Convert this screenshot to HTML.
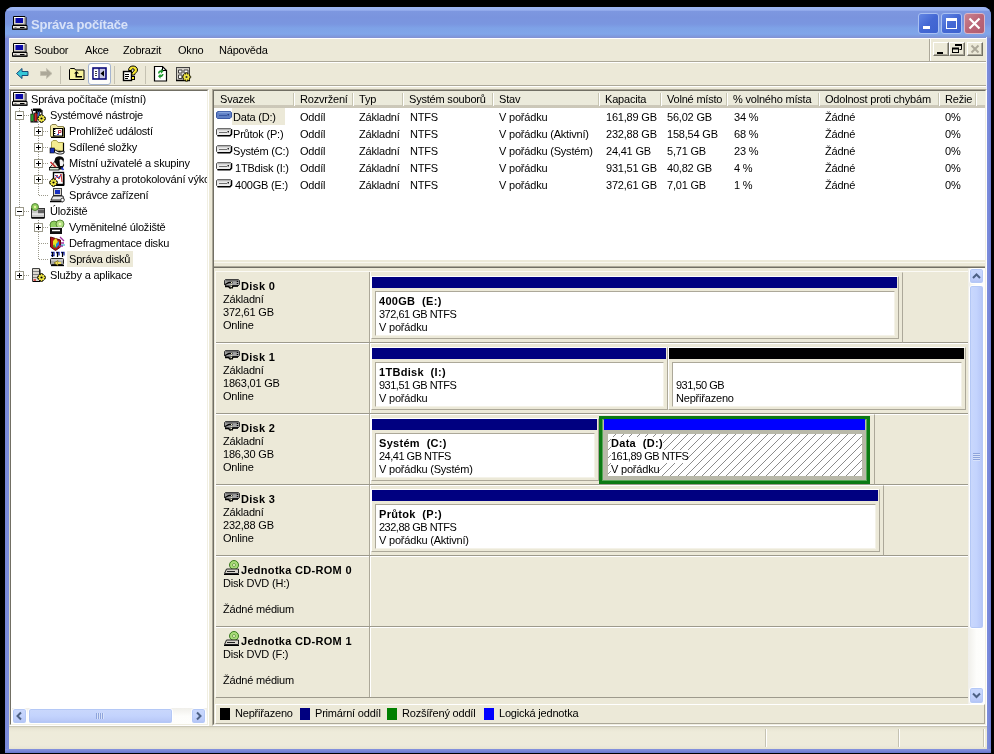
<!DOCTYPE html>
<html><head><meta charset="utf-8"><title>Správa počítače</title>
<style>
*{margin:0;padding:0;box-sizing:border-box}
html,body{width:994px;height:754px;overflow:hidden;background:#000}
body{position:relative;font-family:"Liberation Sans",sans-serif;font-size:11px;color:#000}
.a{position:absolute}
.t{will-change:transform;position:absolute;white-space:nowrap;line-height:13px;height:13px;letter-spacing:-0.2px}
#win{left:5px;top:7px;width:986px;height:746px;background:linear-gradient(90deg,#7886d6 0,#7b8cdb 3px,#7b8cdb 983px,#6f7fd2 986px);border-radius:8px 8px 0 0;overflow:hidden}
#title{left:0;top:0;width:986px;height:31px;background:linear-gradient(#9fb7f3 0,#9ab2f0 3px,#7d97e0 4.500px,#7a94de 10px,#7a96e0 17px,#7ea2e7 21px,#80a5e9 27px,#7e9be0 29px,#8391d0 31px)}
#client{left:9px;top:38px;width:977px;border-left:1px solid #f6f6f2;height:711px;background:#ece9d8}
.cb{width:21px;height:21px;border:1px solid #a9c0f2;border-radius:3px;background:linear-gradient(135deg,#6487e4,#4468d4 50%,#3d62cf)}
.cx{background:linear-gradient(135deg,#c98390,#bb6577 50%,#b05c70);border-color:#dcb6c6}
.mb{width:16px;height:14px;background:#ece9d8;border:1px solid;border-color:#fff #716f64 #716f64 #fff;box-shadow:inset -1px -1px 0 #aca899}
.dv{width:1px;background:repeating-linear-gradient(#fff 0 1px,#9c9a8c 1px 2px)}
.dh{height:1px;background:repeating-linear-gradient(90deg,#9c9a8c 0 1px,#fff 1px 2px)}
.sbb{border:1px solid #fff;border-radius:3px;background:linear-gradient(#cad8fc,#c3d3fd 50%,#b9c9f8 85%,#aebff2);box-shadow:inset 0 0 0 1px #b4c8f6}
.b{font-weight:bold;letter-spacing:0.3px}
.pbox{border:1px solid;border-color:#fff #aca899 #aca899 #fff}
.pin{background:#fff;border:1px solid;border-color:#aca899 #f4f2e8 #f4f2e8 #aca899}
.grp{border:1px solid;border-color:transparent #aca899 #9d9a8c transparent}
.sbv{background:linear-gradient(90deg,#cad8fc,#c3d3fd 50%,#b9c9f8 85%,#aebff2)}
.hb{background:#fff}
.tr{letter-spacing:-0.2px}
.n{letter-spacing:-0.5px}
</style></head><body>
<svg width="0" height="0" style="position:absolute"><defs>
<symbol id="pc" viewBox="0 0 16 16">
<path d="M1.500 1.500h11.500l1 1v7.500h-12.500z" fill="#d8d4cc" stroke="#000" stroke-width="1"/>
<rect x="3.500" y="3" width="7.500" height="5" fill="#0a0aa8"/>
<path d="M12.500 2.500h1v7h-1z" fill="#808080"/>
<path d="M2 2.500h10" stroke="#fff" stroke-width="1"/>
<path d="M.5 10.500h14.500v4h-14.500z" fill="#e8e4dc" stroke="#000" stroke-width="1"/>
<path d="M1 14h14.500" stroke="#202020" stroke-width="1.400"/>
<path d="M8 12.500h4.500" stroke="#000" stroke-width="1"/>
<path d="M2.500 12.500h2" stroke="#808080" stroke-width="1"/>
</symbol>
</defs></svg>
<div id="win" class="a"><div id="title" class="a"></div></div>
<div id="bb" class="a" style="left:5px;top:749px;width:986px;height:4px;background:linear-gradient(#8492de,#7886d6 2px,#6474ca)"></div>
<div id="client" class="a"></div><div class="a" style="left:986px;top:37px;width:1px;height:712px;background:#eef1fa"></div>
<svg class="a" style="left:12px;top:15px" width="16" height="16"><use href="#pc"/></svg>
<div class="t" id="ttxt" style="left:31px;top:17px;font:bold 13px/16px 'Liberation Sans',sans-serif;height:16px;color:#d8e2f8">Správa počítače</div>
<div class="a cb" style="left:918px;top:13px"><div class="a" style="left:4px;top:12px;width:7px;height:3px;background:#fff"></div></div>
<div class="a cb" style="left:941px;top:13px"><div class="a" style="left:4px;top:4px;width:11px;height:11px;border:1px solid #fff;border-top-width:3px"></div></div>
<div class="a cb cx" style="left:964px;top:13px"><svg class="a" style="left:0;top:0" width="19" height="19"><path d="M4.500 4.500l10 10M14.500 4.500l-10 10" stroke="#fff" stroke-width="2.200" fill="none"/></svg></div>
<!-- menu bar -->
<div class="a" style="left:10px;top:38px;width:976px;height:1px;background:#fff"></div>
<svg class="a" style="left:12px;top:42px" width="16" height="16"><use href="#pc"/></svg>
<div class="t m" style="left:34px;top:44px">Soubor</div>
<div class="t m" style="left:85px;top:44px">Akce</div>
<div class="t m" style="left:123px;top:44px">Zobrazit</div>
<div class="t m" style="left:178px;top:44px">Okno</div>
<div class="t m" style="left:219px;top:44px">Nápověda</div>
<div class="a" style="left:929px;top:39px;width:1px;height:22px;background:#aca899"></div>
<div class="a" style="left:930px;top:39px;width:1px;height:22px;background:#fff"></div>
<div class="a mb" style="left:933px;top:42px"><div class="a" style="left:3px;top:9px;width:6px;height:2px;background:#000"></div></div>
<div class="a mb" style="left:949px;top:42px"><svg class="a" style="left:0;top:0" width="14" height="12"><path d="M5.500 2.500h6v4h-2" fill="none" stroke="#000" stroke-width="1"/><path d="M5 2h7" stroke="#000" stroke-width="2"/><rect x="2.500" y="5.500" width="6" height="4" fill="none" stroke="#000"/><path d="M2 5.500h7" stroke="#000" stroke-width="2"/></svg></div>
<div class="a mb" style="left:967px;top:42px"><svg class="a" style="left:0;top:0" width="14" height="12"><path d="M3.500 2.500l7 7M10.500 2.500l-7 7" stroke="#aca899" stroke-width="2" fill="none"/></svg></div>
<div class="a" style="left:10px;top:61px;width:976px;height:1px;background:#aca899"></div>
<div class="a" style="left:10px;top:62px;width:976px;height:1px;background:#fff"></div>

<!-- toolbar -->
<svg class="a" style="left:14px;top:65px" width="180" height="18">
<!-- back -->
<path d="M2.500 8.500l5.500-5v3h6v4h-6v3z" fill="#35c8d8" stroke="#1a4a78" stroke-width="1" stroke-linejoin="round"/>
<!-- forward -->
<path d="M38 8.500l-5.500-5v3h-6v4h6v3z" fill="#aca899" stroke="#c4c0b0" stroke-width="1"/>
<!-- up folder -->
<path d="M55.500 14.500v-10l1-1h4l1 1.500h8.500v9.500z" fill="#f7f39c" stroke="#000" stroke-width="1"/>
<path d="M60 8.500l2.500-2.500l2.500 2.500h-2v2.500h5v1.500h-6.500v-4z" fill="#000"/>
<!-- help -->
<rect x="109.500" y="6.500" width="8" height="9" fill="#fff" stroke="#000" stroke-width="1.400"/>
<path d="M111 9.500h4M111 11.500h4M111 13.500h3" stroke="#000" stroke-width="1"/>
<path d="M114.500 5.500c0-3 2-4.500 4.500-4.500s4.500 1.500 4.500 4c0 2.500-3 3-3 5h-3c0-3 2.800-3.500 2.800-5c0-.8-.6-1.200-1.400-1.200s-1.400.5-1.400 1.700z" fill="#f8e830" stroke="#000" stroke-width="1"/>
<rect x="117.500" y="11.500" width="3" height="3" fill="#f8e830" stroke="#000" stroke-width="1"/>
<!-- refresh -->
<path d="M140.500 1.500h8l4 4v10.500h-12z" fill="#fff" stroke="#000" stroke-width="1.200"/>
<path d="M148.500 1.500v4h4" fill="none" stroke="#000"/>
<path d="M144 8.500c0-2 1.500-3.200 3-3.200v-1.500l2.500 2.500l-2.500 2.500v-1.500c-1 0-1.500.5-1.500 1.200z" fill="#1f9a2f"/>
<path d="M149.500 9c0 2-1.500 3.200-3 3.200v1.500l-2.500-2.500l2.500-2.500v1.500c1 0 1.500-.5 1.500-1.200z" fill="#1f9a2f"/>
<!-- settings -->
<rect x="162.500" y="2.500" width="13" height="13" fill="#d4d0c8" stroke="#404040"/>
<path d="M162 15.500h14" stroke="#000" stroke-width="1.500"/>
<path d="M164.500 5h3.500v3h-3.500zM170 5h4v3h-4zM164.500 10h3.500v3.500h-3.500z" fill="#fff" stroke="#404040" stroke-width="1"/>
<g transform="translate(172.500 12)"><path d="M-1-4.200h2v8.400h-2zM-4.200-1h8.400v2h-8.400z" fill="#e8dc30" stroke="#000" stroke-width=".7"/><path d="M-3.400-2l1.400-1.400l5.400 5.400l-1.400 1.400zM2-3.400l1.400 1.400l-5.400 5.400l-1.400-1.400z" fill="#e8dc30" stroke="#000" stroke-width=".7"/><circle r="2.700" fill="#f0e848"/><circle r="1.100" fill="#303030"/></g>
</svg>
<div class="a" style="left:60px;top:66px;width:1px;height:18px;background:#c5c2b2"></div>
<div class="a" style="left:114px;top:66px;width:1px;height:18px;background:#c5c2b2"></div>
<div class="a" style="left:145px;top:66px;width:1px;height:18px;background:#c5c2b2"></div>
<div class="a" style="left:88px;top:63px;width:23px;height:22px;border:1px solid #a4b4d0;border-radius:3px;background:#fdfdfb"></div>
<svg class="a" style="left:92px;top:67px" width="16" height="14"><rect x="1" y="1" width="13" height="11" fill="#c8c8e4" stroke="#0a0a78" stroke-width="1.600"/><rect x="1.800" y="2.500" width="5" height="8.500" fill="#fff"/><path d="M7 1v11" stroke="#0a0a78" stroke-width="1.200"/><path d="M3 4.500h2M3 6.500h2M3 8.500h2" stroke="#404040" stroke-width="1"/><path d="M12 3.500v6l-3.500-3z" fill="#000"/></svg>
<div class="a" style="left:10px;top:85px;width:976px;height:1px;background:#aca899"></div>
<div class="a" style="left:10px;top:86px;width:976px;height:1px;background:#fff"></div>

<!--TREE_START-->
<div class="a" style="left:9px;top:89px;width:200px;height:637px;background:#fff;border:1px solid;border-color:#aca899 #fff #fff #d5d2c4"></div>
<div class="a" style="left:10px;top:90px;width:198px;height:635px;border:1px solid;border-color:#716f64 #f1efe2 #f1efe2 #716f64"></div>
<div class="a" id="tree" style="left:12px;top:91px;width:195px;height:617px;overflow:hidden">
<div class="a dv" style="left:7px;top:16px;height:168px"></div>
<div class="a dv" style="left:26px;top:32px;height:72px"></div>
<div class="a dv" style="left:26px;top:128px;height:40px"></div>
<svg class="a" style="left:0px;top:0px" width="16" height="16"><use href="#pc"/></svg>
<div class="t tr" style="left:19px;top:2px">Správa počítače (místní)</div>
<div class="a dh" style="left:8px;top:24px;width:10px"></div>
<svg class="a" style="left:3px;top:20px" width="9" height="9"><rect x=".5" y=".5" width="8" height="8" fill="#fff" stroke="#9c9a8c"/><path d="M2 4.500h5" stroke="#000"/></svg>
<svg class="a" style="left:18px;top:16px" width="16" height="16"><path d="M3 1.500h7.500l1.500 1.500v2.500h-2v-1.500h-2.500v3h-2v-3h-2.500z" fill="#000"/><path d="M1.500 2l1.500 5M12 3v4" stroke="#202020" stroke-width="1.300"/><rect x=".8" y="7" width="2.700" height="7.500" fill="#28a028" stroke="#000" stroke-width=".6"/><rect x="4.300" y="6" width="2.700" height="8.500" fill="#d42020" stroke="#000" stroke-width=".6"/><rect x="7.800" y="4" width="1.800" height="7" fill="#3868d8" stroke="#000" stroke-width=".6"/><path d="M.5 15h8" stroke="#000" stroke-width="1"/><g transform="translate(11.5 11.5)"><path d="M-1-4h2v8h-2zM-4-1h8v2h-8z" fill="#e8dc30" stroke="#000" stroke-width=".7"/><path d="M-3.200-1.800l1.400-1.400l5 5l-1.400 1.400zM1.800-3.200l1.400 1.400l-5 5l-1.400-1.400z" fill="#e8dc30" stroke="#000" stroke-width=".7"/><circle r="2.600" fill="#f0e848"/><circle r="1.100" fill="#000"/></g></svg>
<div class="t tr" style="left:38px;top:18px">Systémové nástroje</div>
<div class="a dh" style="left:27px;top:40px;width:10px"></div>
<svg class="a" style="left:22px;top:36px" width="9" height="9"><rect x=".5" y=".5" width="8" height="8" fill="#fff" stroke="#9c9a8c"/><path d="M2 4.500h5" stroke="#000"/><path d="M4.500 2v5" stroke="#000"/></svg>
<svg class="a" style="left:37px;top:32px" width="16" height="16"><path d="M1.500 13.500v-10.500l1.500-1.500h4l1.500 2h6v10z" fill="#f4eca8" stroke="#8a8248"/><path d="M2 14.500h13.500v-10" fill="none" stroke="#000" stroke-width="1.200"/><rect x="4.500" y="5.500" width="9" height="7.500" fill="#fff" stroke="#000"/><path d="M5.500 6v6.500" stroke="#000" stroke-dasharray="1 1" stroke-width="1.600"/><path d="M9.500 7.500v4M9.500 7.500h2.500v2h-2.500" stroke="#c03048" fill="none" stroke-width="1"/><path d="M8 11.500h2" stroke="#3048c0"/></svg>
<div class="t tr" style="left:57px;top:34px">Prohlížeč událostí</div>
<div class="a dh" style="left:27px;top:56px;width:10px"></div>
<svg class="a" style="left:22px;top:52px" width="9" height="9"><rect x=".5" y=".5" width="8" height="8" fill="#fff" stroke="#9c9a8c"/><path d="M2 4.500h5" stroke="#000"/><path d="M4.500 2v5" stroke="#000"/></svg>
<svg class="a" style="left:37px;top:48px" width="16" height="16"><path d="M2.500 10.500v-7.500l1.500-1.500h3.500l1.500 2h5.500v8.500z" fill="#f4ec90" stroke="#a8a050"/><path d="M14.500 4v8.500h-6" fill="none" stroke="#000" stroke-width="1.200"/><rect x="1" y="9" width="4.500" height="5" fill="#1830b8" stroke="#000" stroke-width=".6"/><path d="M5.500 11c2 0 3 2 5 2s3-1 4.500-1v2c-2 1.500-7 1.500-9.500-1z" fill="#f8f8f8" stroke="#000" stroke-width=".9"/></svg>
<div class="t tr" style="left:57px;top:50px">Sdílené složky</div>
<div class="a dh" style="left:27px;top:72px;width:10px"></div>
<svg class="a" style="left:22px;top:68px" width="9" height="9"><rect x=".5" y=".5" width="8" height="8" fill="#fff" stroke="#9c9a8c"/><path d="M2 4.500h5" stroke="#000"/><path d="M4.500 2v5" stroke="#000"/></svg>
<svg class="a" style="left:37px;top:64px" width="16" height="16"><path d="M6 4c1-4 8.500-3.500 9 .5l-.8 3.500l1 2l-2 4.500h-5l-3.500-5z" fill="#080808"/><path d="M10.500 5c2-1 3.500 0 3.500 2l.500 1.800l-1 2.200h-2.500z" fill="#f4f4f4"/><path d="M12.500 12.500l2 2.500" stroke="#2038d0" stroke-width="1.600"/><path d="M.8 12.500l5-6l4 6z" fill="#ece4d0" stroke="#000" stroke-width=".8"/><path d="M1.500 7l6.500 6.500" stroke="#c83030" stroke-width="1.600"/><rect x=".5" y="12.500" width="9.500" height="2.500" fill="#d8ecd8" stroke="#000" stroke-width=".8"/></svg>
<div class="t tr" style="left:57px;top:66px">Místní uživatelé a skupiny</div>
<div class="a dh" style="left:27px;top:88px;width:10px"></div>
<svg class="a" style="left:22px;top:84px" width="9" height="9"><rect x=".5" y=".5" width="8" height="8" fill="#fff" stroke="#9c9a8c"/><path d="M2 4.500h5" stroke="#000"/><path d="M4.500 2v5" stroke="#000"/></svg>
<svg class="a" style="left:37px;top:80px" width="16" height="16"><rect x="4.500" y="1.500" width="10" height="12" fill="#fff" stroke="#000" stroke-width="1.400"/><path d="M15 3v11.500h-9" fill="none" stroke="#000"/><path d="M6 9l2-5l2 4l2-5l1 8" fill="none" stroke="#c82828" stroke-width="1"/><path d="M6 4l3 3l3-3" fill="none" stroke="#3048c8" stroke-width="1"/><g transform="translate(4.5 11.5)"><path d="M-1-4h2v8h-2zM-4-1h8v2h-8z" fill="#e8dc30" stroke="#000" stroke-width=".7"/><path d="M-3.200-1.800l1.400-1.400l5 5l-1.400 1.400zM1.800-3.200l1.400 1.400l-5 5l-1.400-1.400z" fill="#e8dc30" stroke="#000" stroke-width=".7"/><circle r="2.600" fill="#f0e848"/><circle r="1.100" fill="#000"/></g></svg>
<div class="t tr" style="left:57px;top:82px">Výstrahy a protokolování výkonu</div>
<div class="a dh" style="left:27px;top:104px;width:10px"></div>
<svg class="a" style="left:37px;top:96px" width="16" height="16"><rect x="4.500" y="1.500" width="8" height="7" fill="#d8d4cc" stroke="#404040"/><rect x="6" y="3" width="5" height="4" fill="#1830c0"/><path d="M2 13l2-4h10l1 4z" fill="#e8e8e8" stroke="#000" stroke-width=".8"/><path d="M1 14.500h13" stroke="#000" stroke-width="1.500"/><circle cx="13.500" cy="13" r="1.800" fill="#fff" stroke="#404040"/></svg>
<div class="t tr" style="left:57px;top:98px">Správce zařízení</div>
<div class="a dh" style="left:8px;top:120px;width:10px"></div>
<svg class="a" style="left:3px;top:116px" width="9" height="9"><rect x=".5" y=".5" width="8" height="8" fill="#fff" stroke="#9c9a8c"/><path d="M2 4.500h5" stroke="#000"/></svg>
<svg class="a" style="left:18px;top:112px" width="16" height="16"><rect x="1.500" y="5.500" width="13" height="9" fill="#c8c8c8" stroke="#303030"/><rect x="8" y="6.500" width="6" height="4" fill="#606060"/><path d="M2 11h12" stroke="#fff"/><path d="M1.500 15h13" stroke="#000" stroke-width="1.500"/><circle cx="5" cy="4" r="3.500" fill="#90d060" stroke="#407020" stroke-width=".8"/><circle cx="5" cy="4" r="1.200" fill="#e8f0a0"/></svg>
<div class="t tr" style="left:38px;top:114px">Úložiště</div>
<div class="a dh" style="left:27px;top:136px;width:10px"></div>
<svg class="a" style="left:22px;top:132px" width="9" height="9"><rect x=".5" y=".5" width="8" height="8" fill="#fff" stroke="#9c9a8c"/><path d="M2 4.500h5" stroke="#000"/><path d="M4.500 2v5" stroke="#000"/></svg>
<svg class="a" style="left:37px;top:128px" width="16" height="16"><circle cx="5" cy="6" r="4" fill="#90d060" stroke="#407020" stroke-width=".8"/><circle cx="11" cy="5" r="4" fill="#b0e080" stroke="#407020" stroke-width=".8"/><circle cx="11" cy="5" r="1.300" fill="#f0f8c0"/><rect x="1" y="9" width="12" height="6" fill="#101010"/><path d="M3 11.500h8" stroke="#fff" stroke-width="1.500"/><path d="M2 8.500h11" stroke="#e0e0e0" stroke-width="1"/></svg>
<div class="t tr" style="left:57px;top:130px">Vyměnitelné úložiště</div>
<div class="a dh" style="left:27px;top:152px;width:10px"></div>
<svg class="a" style="left:37px;top:144px" width="16" height="16"><path d="M1.500 2v10l5 3.500l5-3.500v-7z" fill="#b01818" stroke="#600808"/><path d="M4 6l3-3l2 4l-2 5l-3-2z" fill="#e8e020"/><path d="M7 9l3-3v4l-3 3z" fill="#2080e0"/><path d="M5 9l2 4l-3-1z" fill="#30b030"/><path d="M11 2l4 4M12 8h3M10 11h4" stroke="#a030a0" stroke-width="1.300"/><path d="M12 10h4" stroke="#20a0c0" stroke-width="1"/></svg>
<div class="t tr" style="left:57px;top:146px">Defragmentace disku</div>
<div class="a dh" style="left:27px;top:168px;width:10px"></div>
<svg class="a" style="left:37px;top:160px" width="16" height="16"><path d="M2 1.500h3v3h-3M7 1.500h3v3M12 1.500h3v3" fill="none" stroke="#1020a0" stroke-width="1.300"/><path d="M3.500 1v5M8.500 1v5M13.500 1v5" stroke="#000" stroke-width="1.200"/><rect x="1.500" y="7.500" width="13" height="6" rx="1" fill="#a8a8a8" stroke="#202020"/><path d="M2 9h12" stroke="#e8e8e8"/><path d="M2 14.500h13" stroke="#000" stroke-width="1.300"/><path d="M9 9.500l-4 2.500l4 2.500z" fill="#f0e060" stroke="#605000" stroke-width=".6"/><rect x="9" y="11" width="3" height="2" fill="#f0e060"/></svg>
<div class="a" style="left:55px;top:160px;width:66px;height:16px;background:#ece9d8"></div>
<div class="t tr" style="left:57px;top:162px">Správa disků</div>
<div class="a dh" style="left:8px;top:184px;width:10px"></div>
<svg class="a" style="left:3px;top:180px" width="9" height="9"><rect x=".5" y=".5" width="8" height="8" fill="#fff" stroke="#9c9a8c"/><path d="M2 4.500h5" stroke="#000"/><path d="M4.500 2v5" stroke="#000"/></svg>
<svg class="a" style="left:18px;top:176px" width="16" height="16"><path d="M2.500 1.500h7v13h-7z" fill="#dcd8d0" stroke="#404040"/><path d="M10 2.500v12h-7" stroke="#000" fill="none"/><path d="M3 4.500h6M3 7.500h6M3 10.500h6" stroke="#808080"/><path d="M3.500 13h2.500" stroke="#d02020" stroke-width="1.400"/><g transform="translate(11.5 10.5)"><path d="M-1-4h2v8h-2zM-4-1h8v2h-8z" fill="#e8dc30" stroke="#000" stroke-width=".7"/><path d="M-3.200-1.800l1.400-1.400l5 5l-1.400 1.400zM1.800-3.200l1.400 1.400l-5 5l-1.400-1.400z" fill="#e8dc30" stroke="#000" stroke-width=".7"/><circle r="2.600" fill="#f0e848"/><circle r="1.100" fill="#000"/></g></svg>
<div class="t tr" style="left:38px;top:178px">Služby a aplikace</div>
</div>
<div class="a" style="left:12px;top:708px;width:195px;height:16px;background:linear-gradient(#f0efea,#fdfdfb 50%,#fefefc)"></div>
<div class="a sbb" style="left:12px;top:708px;width:15px;height:16px"><svg width="15" height="16" class="a" style="left:-1px;top:-1px"><path d="M9 4.500l-3.500 3.500l3.500 3.500" fill="none" stroke="#4d6185" stroke-width="2"/></svg></div>
<div class="a sbb" style="left:191px;top:708px;width:15px;height:16px"><svg width="15" height="16" class="a" style="left:-1px;top:-1px"><path d="M6 4.500l3.500 3.500l-3.500 3.500" fill="none" stroke="#4d6185" stroke-width="2"/></svg></div>
<div class="a sbb" style="left:28px;top:708px;width:145px;height:16px"><div class="a" style="left:67px;top:4px;width:8px;height:6px;background:repeating-linear-gradient(90deg,#8ea4dc 0 1px,#d8e2fa 1px 2px)"></div></div>

<!--TREE_END-->
<!--LIST_START-->
<div class="a" style="left:212px;top:89px;width:775px;height:637px;background:#ece9d8;border:1px solid;border-color:#aca899 #fff #fff #aca899"></div>
<div class="a" style="left:213px;top:90px;width:773px;height:635px;border:1px solid;border-color:#716f64 #f1efe2 #f1efe2 #716f64"></div>
<div class="a" style="left:214px;top:91px;width:771px;height:169px;background:#fff"></div>
<div class="a" style="left:214px;top:266px;width:771px;height:1px;background:#aca899"></div><div class="a" style="left:214px;top:267px;width:771px;height:1px;background:#716f64"></div>
<div class="a" style="left:214px;top:91px;width:771px;height:17px;background:#ebeadb;border-bottom:3px solid;border-image:linear-gradient(#e2decd,#d6d2c2 50%,#cbc7b8) 1;"></div>
<div class="t lh" style="left:220px;top:93px">Svazek</div>
<div class="a" style="left:293px;top:93px;width:1px;height:13px;background:#c7c5b2"></div><div class="a" style="left:294px;top:93px;width:1px;height:13px;background:#fff"></div>
<div class="t lh" style="left:300px;top:93px">Rozvržení</div>
<div class="a" style="left:352px;top:93px;width:1px;height:13px;background:#c7c5b2"></div><div class="a" style="left:353px;top:93px;width:1px;height:13px;background:#fff"></div>
<div class="t lh" style="left:359px;top:93px">Typ</div>
<div class="a" style="left:402px;top:93px;width:1px;height:13px;background:#c7c5b2"></div><div class="a" style="left:403px;top:93px;width:1px;height:13px;background:#fff"></div>
<div class="t lh" style="left:409px;top:93px">Systém souborů</div>
<div class="a" style="left:492px;top:93px;width:1px;height:13px;background:#c7c5b2"></div><div class="a" style="left:493px;top:93px;width:1px;height:13px;background:#fff"></div>
<div class="t lh" style="left:499px;top:93px">Stav</div>
<div class="a" style="left:598px;top:93px;width:1px;height:13px;background:#c7c5b2"></div><div class="a" style="left:599px;top:93px;width:1px;height:13px;background:#fff"></div>
<div class="t lh" style="left:605px;top:93px">Kapacita</div>
<div class="a" style="left:660px;top:93px;width:1px;height:13px;background:#c7c5b2"></div><div class="a" style="left:661px;top:93px;width:1px;height:13px;background:#fff"></div>
<div class="t lh" style="left:667px;top:93px">Volné místo</div>
<div class="a" style="left:726px;top:93px;width:1px;height:13px;background:#c7c5b2"></div><div class="a" style="left:727px;top:93px;width:1px;height:13px;background:#fff"></div>
<div class="t lh" style="left:733px;top:93px">% volného místa</div>
<div class="a" style="left:818px;top:93px;width:1px;height:13px;background:#c7c5b2"></div><div class="a" style="left:819px;top:93px;width:1px;height:13px;background:#fff"></div>
<div class="t lh" style="left:825px;top:93px">Odolnost proti chybám</div>
<div class="a" style="left:938px;top:93px;width:1px;height:13px;background:#c7c5b2"></div><div class="a" style="left:939px;top:93px;width:1px;height:13px;background:#fff"></div>
<div class="t lh" style="left:945px;top:93px">Režie</div>
<div class="a" style="left:975px;top:93px;width:1px;height:13px;background:#c7c5b2"></div><div class="a" style="left:976px;top:93px;width:1px;height:13px;background:#fff"></div>
<div class="a" style="left:232px;top:108px;width:53px;height:17px;background:#ece9d8"></div>
<svg class="a" style="left:216px;top:110px" width="17" height="11"><path d="M2 1.500h12.500l1 1v4.500l-1.500 1.500h-12.500l-1-1v-5z" fill="#5f7fc4" stroke="#3a58a4"/><path d="M2.500 2.500h11.500" stroke="#86a2dc" stroke-width="1.400"/><path d="M3 5.500h8" stroke="#3a58a4"/><rect x="11.500" y="4" width="1.500" height="1.500" fill="#2a3f80"/></svg>
<div class="t" style="left:233px;top:111px">Data (D:)</div>
<div class="t" style="left:300px;top:111px">Oddíl</div>
<div class="t" style="left:359px;top:111px">Základní</div>
<div class="t" style="left:410px;top:111px">NTFS</div>
<div class="t" style="left:499px;top:111px">V pořádku</div>
<div class="t" style="left:606px;top:111px">161,89 GB</div>
<div class="t" style="left:667px;top:111px">56,02 GB</div>
<div class="t" style="left:734px;top:111px">34 %</div>
<div class="t" style="left:825px;top:111px">Žádné</div>
<div class="t" style="left:945px;top:111px">0%</div>
<svg class="a" style="left:216px;top:127px" width="17" height="11"><path d="M2 1.500h12.500l1 1v4.500l-1.500 1.500h-12.500l-1-1v-5z" fill="#ececec" stroke="#505050"/><path d="M2 2.500h12" stroke="#b4b4b4" stroke-width="1.600"/><path d="M3 5.500h8" stroke="#707070"/><rect x="11.500" y="4" width="1.500" height="1.500" fill="#202020"/><path d="M1.500 8.800h12.500l1.500-1.500v-5" fill="none" stroke="#000" stroke-width="1.500"/></svg>
<div class="t" style="left:233px;top:128px">Průtok (P:)</div>
<div class="t" style="left:300px;top:128px">Oddíl</div>
<div class="t" style="left:359px;top:128px">Základní</div>
<div class="t" style="left:410px;top:128px">NTFS</div>
<div class="t" style="left:499px;top:128px">V pořádku (Aktivní)</div>
<div class="t" style="left:606px;top:128px">232,88 GB</div>
<div class="t" style="left:667px;top:128px">158,54 GB</div>
<div class="t" style="left:734px;top:128px">68 %</div>
<div class="t" style="left:825px;top:128px">Žádné</div>
<div class="t" style="left:945px;top:128px">0%</div>
<svg class="a" style="left:216px;top:144px" width="17" height="11"><path d="M2 1.500h12.500l1 1v4.500l-1.500 1.500h-12.500l-1-1v-5z" fill="#ececec" stroke="#505050"/><path d="M2 2.500h12" stroke="#b4b4b4" stroke-width="1.600"/><path d="M3 5.500h8" stroke="#707070"/><rect x="11.500" y="4" width="1.500" height="1.500" fill="#202020"/><path d="M1.500 8.800h12.500l1.500-1.500v-5" fill="none" stroke="#000" stroke-width="1.500"/></svg>
<div class="t" style="left:233px;top:145px">Systém (C:)</div>
<div class="t" style="left:300px;top:145px">Oddíl</div>
<div class="t" style="left:359px;top:145px">Základní</div>
<div class="t" style="left:410px;top:145px">NTFS</div>
<div class="t" style="left:499px;top:145px">V pořádku (Systém)</div>
<div class="t" style="left:606px;top:145px">24,41 GB</div>
<div class="t" style="left:667px;top:145px">5,71 GB</div>
<div class="t" style="left:734px;top:145px">23 %</div>
<div class="t" style="left:825px;top:145px">Žádné</div>
<div class="t" style="left:945px;top:145px">0%</div>
<svg class="a" style="left:216px;top:161px" width="17" height="11"><path d="M2 1.500h12.500l1 1v4.500l-1.500 1.500h-12.500l-1-1v-5z" fill="#ececec" stroke="#505050"/><path d="M2 2.500h12" stroke="#b4b4b4" stroke-width="1.600"/><path d="M3 5.500h8" stroke="#707070"/><rect x="11.500" y="4" width="1.500" height="1.500" fill="#202020"/><path d="M1.500 8.800h12.500l1.500-1.500v-5" fill="none" stroke="#000" stroke-width="1.500"/></svg>
<div class="t" style="left:235px;top:162px">1TBdisk (I:)</div>
<div class="t" style="left:300px;top:162px">Oddíl</div>
<div class="t" style="left:359px;top:162px">Základní</div>
<div class="t" style="left:410px;top:162px">NTFS</div>
<div class="t" style="left:499px;top:162px">V pořádku</div>
<div class="t" style="left:606px;top:162px">931,51 GB</div>
<div class="t" style="left:667px;top:162px">40,82 GB</div>
<div class="t" style="left:734px;top:162px">4 %</div>
<div class="t" style="left:825px;top:162px">Žádné</div>
<div class="t" style="left:945px;top:162px">0%</div>
<svg class="a" style="left:216px;top:178px" width="17" height="11"><path d="M2 1.500h12.500l1 1v4.500l-1.500 1.500h-12.500l-1-1v-5z" fill="#ececec" stroke="#505050"/><path d="M2 2.500h12" stroke="#b4b4b4" stroke-width="1.600"/><path d="M3 5.500h8" stroke="#707070"/><rect x="11.500" y="4" width="1.500" height="1.500" fill="#202020"/><path d="M1.500 8.800h12.500l1.500-1.500v-5" fill="none" stroke="#000" stroke-width="1.500"/></svg>
<div class="t" style="left:235px;top:179px">400GB (E:)</div>
<div class="t" style="left:300px;top:179px">Oddíl</div>
<div class="t" style="left:359px;top:179px">Základní</div>
<div class="t" style="left:410px;top:179px">NTFS</div>
<div class="t" style="left:499px;top:179px">V pořádku</div>
<div class="t" style="left:606px;top:179px">372,61 GB</div>
<div class="t" style="left:667px;top:179px">7,01 GB</div>
<div class="t" style="left:734px;top:179px">1 %</div>
<div class="t" style="left:825px;top:179px">Žádné</div>
<div class="t" style="left:945px;top:179px">0%</div>
<!--LIST_END-->
<!--DISKS_START-->
<div class="a" style="left:214px;top:262px;width:771px;height:1px;background:#f8f7f0"></div>
<div class="a" style="left:215px;top:271px;width:753px;height:1px;background:#fbfaf5"></div><div class="a" style="left:215px;top:271px;width:1px;height:426px;background:#fbfaf5"></div>
<div class="a" style="left:216px;top:342px;width:752px;height:1px;background:#9d9a8c"></div>
<div class="a" style="left:216px;top:343px;width:752px;height:1px;background:#fff"></div>
<div class="a" style="left:369px;top:272px;width:1px;height:70px;background:#aca899"></div><div class="a" style="left:370px;top:272px;width:1px;height:70px;background:#fff"></div>
<svg class="a" style="left:223px;top:278px" width="18" height="12"><path d="M2.500 1.500h12.500l1.500 1v4l-1.500 1.500h-12l-1.500-1.500v-4z" fill="#a4a4a4" stroke="#303030"/><path d="M2.500 2.500h12.500" stroke="#6c6c6c" stroke-width="1.600"/><path d="M14.500 3v4.500" stroke="#000" stroke-dasharray="1 1" stroke-width="1.500"/><path d="M1.500 6.500c2 0 3-2 5-2h3M2 8.500h3.500l1.500 1.500h2l1-2h5" fill="none" stroke="#000" stroke-width="1.500"/><path d="M8.500 4v6.500" stroke="#e8e8c0" stroke-dasharray="1 1" stroke-width="1"/></svg>
<div class="t b" style="left:241px;top:280px">Disk 0</div>
<div class="t" style="left:223px;top:293px">Základní</div>
<div class="t" style="left:223px;top:306px">372,61 GB</div>
<div class="t" style="left:223px;top:319px">Online</div>
<div class="a" style="left:216px;top:413px;width:752px;height:1px;background:#9d9a8c"></div>
<div class="a" style="left:216px;top:414px;width:752px;height:1px;background:#fff"></div>
<div class="a" style="left:369px;top:343px;width:1px;height:70px;background:#aca899"></div><div class="a" style="left:370px;top:343px;width:1px;height:70px;background:#fff"></div>
<svg class="a" style="left:223px;top:349px" width="18" height="12"><path d="M2.500 1.500h12.500l1.500 1v4l-1.500 1.500h-12l-1.500-1.500v-4z" fill="#a4a4a4" stroke="#303030"/><path d="M2.500 2.500h12.500" stroke="#6c6c6c" stroke-width="1.600"/><path d="M14.500 3v4.500" stroke="#000" stroke-dasharray="1 1" stroke-width="1.500"/><path d="M1.500 6.500c2 0 3-2 5-2h3M2 8.500h3.500l1.500 1.500h2l1-2h5" fill="none" stroke="#000" stroke-width="1.500"/><path d="M8.500 4v6.500" stroke="#e8e8c0" stroke-dasharray="1 1" stroke-width="1"/></svg>
<div class="t b" style="left:241px;top:351px">Disk 1</div>
<div class="t" style="left:223px;top:364px">Základní</div>
<div class="t" style="left:223px;top:377px">1863,01 GB</div>
<div class="t" style="left:223px;top:390px">Online</div>
<div class="a" style="left:216px;top:484px;width:752px;height:1px;background:#9d9a8c"></div>
<div class="a" style="left:216px;top:485px;width:752px;height:1px;background:#fff"></div>
<div class="a" style="left:369px;top:414px;width:1px;height:70px;background:#aca899"></div><div class="a" style="left:370px;top:414px;width:1px;height:70px;background:#fff"></div>
<svg class="a" style="left:223px;top:420px" width="18" height="12"><path d="M2.500 1.500h12.500l1.500 1v4l-1.500 1.500h-12l-1.500-1.500v-4z" fill="#a4a4a4" stroke="#303030"/><path d="M2.500 2.500h12.500" stroke="#6c6c6c" stroke-width="1.600"/><path d="M14.500 3v4.500" stroke="#000" stroke-dasharray="1 1" stroke-width="1.500"/><path d="M1.500 6.500c2 0 3-2 5-2h3M2 8.500h3.500l1.500 1.500h2l1-2h5" fill="none" stroke="#000" stroke-width="1.500"/><path d="M8.500 4v6.500" stroke="#e8e8c0" stroke-dasharray="1 1" stroke-width="1"/></svg>
<div class="t b" style="left:241px;top:422px">Disk 2</div>
<div class="t" style="left:223px;top:435px">Základní</div>
<div class="t" style="left:223px;top:448px">186,30 GB</div>
<div class="t" style="left:223px;top:461px">Online</div>
<div class="a" style="left:216px;top:555px;width:752px;height:1px;background:#9d9a8c"></div>
<div class="a" style="left:216px;top:556px;width:752px;height:1px;background:#fff"></div>
<div class="a" style="left:369px;top:485px;width:1px;height:70px;background:#aca899"></div><div class="a" style="left:370px;top:485px;width:1px;height:70px;background:#fff"></div>
<svg class="a" style="left:223px;top:491px" width="18" height="12"><path d="M2.500 1.500h12.500l1.500 1v4l-1.500 1.500h-12l-1.500-1.500v-4z" fill="#a4a4a4" stroke="#303030"/><path d="M2.500 2.500h12.500" stroke="#6c6c6c" stroke-width="1.600"/><path d="M14.500 3v4.500" stroke="#000" stroke-dasharray="1 1" stroke-width="1.500"/><path d="M1.500 6.500c2 0 3-2 5-2h3M2 8.500h3.500l1.500 1.500h2l1-2h5" fill="none" stroke="#000" stroke-width="1.500"/><path d="M8.500 4v6.500" stroke="#e8e8c0" stroke-dasharray="1 1" stroke-width="1"/></svg>
<div class="t b" style="left:241px;top:493px">Disk 3</div>
<div class="t" style="left:223px;top:506px">Základní</div>
<div class="t" style="left:223px;top:519px">232,88 GB</div>
<div class="t" style="left:223px;top:532px">Online</div>
<div class="a" style="left:216px;top:626px;width:752px;height:1px;background:#9d9a8c"></div>
<div class="a" style="left:216px;top:627px;width:752px;height:1px;background:#fff"></div>
<div class="a" style="left:369px;top:556px;width:1px;height:70px;background:#aca899"></div><div class="a" style="left:370px;top:556px;width:1px;height:70px;background:#fff"></div>
<svg class="a" style="left:223px;top:560px" width="18" height="15"><circle cx="11" cy="5" r="4.500" fill="#a8dc78" stroke="#3a7a20"/><circle cx="11" cy="5" r="1.500" fill="#f4f8d0" stroke="#3a7a20" stroke-width=".6"/><path d="M1.500 13.500l2-4.500h12v4.500z" fill="#d8d4cc" stroke="#202020"/><path d="M4 11.500h8" stroke="#202020"/><path d="M1 14.500h15" stroke="#000"/></svg>
<div class="t b" style="left:241px;top:564px">Jednotka CD-ROM 0</div>
<div class="t" style="left:223px;top:577px">Disk DVD (H:)</div>
<div class="t" style="left:223px;top:603px">Žádné médium</div>
<div class="a" style="left:216px;top:697px;width:752px;height:1px;background:#9d9a8c"></div>
<div class="a" style="left:369px;top:627px;width:1px;height:70px;background:#aca899"></div><div class="a" style="left:370px;top:627px;width:1px;height:70px;background:#fff"></div>
<svg class="a" style="left:223px;top:631px" width="18" height="15"><circle cx="11" cy="5" r="4.500" fill="#a8dc78" stroke="#3a7a20"/><circle cx="11" cy="5" r="1.500" fill="#f4f8d0" stroke="#3a7a20" stroke-width=".6"/><path d="M1.500 13.500l2-4.500h12v4.500z" fill="#d8d4cc" stroke="#202020"/><path d="M4 11.500h8" stroke="#202020"/><path d="M1 14.500h15" stroke="#000"/></svg>
<div class="t b" style="left:241px;top:635px">Jednotka CD-ROM 1</div>
<div class="t" style="left:223px;top:648px">Disk DVD (F:)</div>
<div class="t" style="left:223px;top:674px">Žádné médium</div>
<div class="a grp" style="left:370px;top:272px;width:533px;height:71px"></div>
<div class="a pbox" style="left:371px;top:276px;width:528px;height:63px"></div>
<div class="a" style="left:372px;top:277px;width:525px;height:11px;background:#000080"></div>
<div class="a pin" style="left:375px;top:291px;width:520px;height:45px"></div>
<div class="t b" style="left:379px;top:295px">400GB&nbsp; (E:)</div>
<div class="t n" style="left:379px;top:308px">372,61 GB NTFS</div>
<div class="t" style="left:379px;top:321px">V pořádku</div>
<div class="a grp" style="left:370px;top:343px;width:599px;height:71px"></div>
<div class="a pbox" style="left:371px;top:347px;width:297px;height:63px"></div>
<div class="a" style="left:372px;top:348px;width:294px;height:11px;background:#000080"></div>
<div class="a pin" style="left:375px;top:362px;width:289px;height:45px"></div>
<div class="t b" style="left:379px;top:366px">1TBdisk&nbsp; (I:)</div>
<div class="t n" style="left:379px;top:379px">931,51 GB NTFS</div>
<div class="t" style="left:379px;top:392px">V pořádku</div>
<div class="a pbox" style="left:668px;top:347px;width:298px;height:63px"></div>
<div class="a" style="left:669px;top:348px;width:295px;height:11px;background:#000"></div>
<div class="a pin" style="left:672px;top:362px;width:290px;height:45px"></div>
<div class="t n" style="left:676px;top:379px">931,50 GB</div>
<div class="t" style="left:676px;top:392px">Nepřiřazeno</div>
<div class="a grp" style="left:370px;top:414px;width:505px;height:71px"></div>
<div class="a pbox" style="left:371px;top:418px;width:228px;height:63px"></div>
<div class="a" style="left:372px;top:419px;width:225px;height:11px;background:#000080"></div>
<div class="a pin" style="left:375px;top:433px;width:220px;height:45px"></div>
<div class="t b" style="left:379px;top:437px">Systém&nbsp; (C:)</div>
<div class="t n" style="left:379px;top:450px">24,41 GB NTFS</div>
<div class="t" style="left:379px;top:463px">V pořádku (Systém)</div>
<div class="a" style="left:599px;top:416px;width:271px;height:68px;background:#b9b9a9;border:3px solid #0c7a14;box-shadow:inset 0 0 0 1px #58a858"></div>
<div class="a" style="left:604px;top:419px;width:261px;height:11px;background:#0000ff"></div>
<div class="a" style="left:608px;top:434px;width:254px;height:42px;background:#fff repeating-linear-gradient(135deg,transparent 0 4.950px,#8c8c8c 4.950px 5.657px)"></div>
<div class="t b hb" style="left:611px;top:437px">Data&nbsp; (D:)</div>
<div class="t n hb" style="left:611px;top:450px">161,89 GB NTFS</div>
<div class="t hb" style="left:611px;top:463px">V pořádku</div>
<div class="a grp" style="left:370px;top:485px;width:514px;height:71px"></div>
<div class="a pbox" style="left:371px;top:489px;width:509px;height:63px"></div>
<div class="a" style="left:372px;top:490px;width:506px;height:11px;background:#000080"></div>
<div class="a pin" style="left:375px;top:504px;width:501px;height:45px"></div>
<div class="t b" style="left:379px;top:508px">Průtok&nbsp; (P:)</div>
<div class="t n" style="left:379px;top:521px">232,88 GB NTFS</div>
<div class="t" style="left:379px;top:534px">V pořádku (Aktivní)</div>
<div class="a" style="left:968px;top:268px;width:17px;height:436px;background:linear-gradient(90deg,#f0efea,#fdfdfb 50%,#fefefc)"></div>
<div class="a sbb" style="left:969px;top:268px;width:15px;height:16px"><svg width="15" height="16" class="a" style="left:-1px;top:-1px"><path d="M4 10l3.500-3.500l3.500 3.500" fill="none" stroke="#4d6185" stroke-width="2"/></svg></div>
<div class="a sbb" style="left:969px;top:687px;width:15px;height:17px"><svg width="15" height="17" class="a" style="left:-1px;top:-1px"><path d="M4 6.500l3.500 3.500l3.500-3.500" fill="none" stroke="#4d6185" stroke-width="2"/></svg></div>
<div class="a sbb sbv" style="left:969px;top:285px;width:15px;height:344px"><div class="a" style="left:3px;top:167px;width:7px;height:8px;background:repeating-linear-gradient(#8ea4dc 0 1px,#d8e2fa 1px 2px)"></div></div>

<div class="a" style="left:215px;top:704px;width:770px;height:20px;border:1px solid;border-color:#fff #aca899 #aca899 #fff"></div>
<div class="a" style="left:220px;top:708px;width:10px;height:12px;background:#000"></div><div class="t" style="left:235px;top:707px">Nepřiřazeno</div>
<div class="a" style="left:300px;top:708px;width:10px;height:12px;background:#000080"></div><div class="t" style="left:315px;top:707px">Primární oddíl</div>
<div class="a" style="left:387px;top:708px;width:10px;height:12px;background:#008000"></div><div class="t" style="left:402px;top:707px">Rozšířený oddíl</div>
<div class="a" style="left:484px;top:708px;width:10px;height:12px;background:#0000ff"></div><div class="t" style="left:499px;top:707px">Logická jednotka</div>
<!--DISKS_END-->
<!--STATUS_START-->
<div class="a" style="left:9px;top:726px;width:978px;height:1px;background:#c9c6b6"></div>
<div class="a" style="left:9px;top:727px;width:978px;height:22px;background:linear-gradient(#dedbc9 0,#e9e6d5 2px,#eeebda 5px,#eeebdb 18px,#e9e6d5 21px,#e2dfcd 23px)"></div>
<div class="a" style="left:765px;top:729px;width:1px;height:18px;background:#c5c2b2"></div><div class="a" style="left:766px;top:729px;width:1px;height:18px;background:#fff"></div>
<div class="a" style="left:898px;top:729px;width:1px;height:18px;background:#c5c2b2"></div><div class="a" style="left:899px;top:729px;width:1px;height:18px;background:#fff"></div>
<div class="a" style="left:983px;top:729px;width:1px;height:18px;background:#c5c2b2"></div><div class="a" style="left:984px;top:729px;width:1px;height:18px;background:#fff"></div>

<!--STATUS_END-->
</body></html>
